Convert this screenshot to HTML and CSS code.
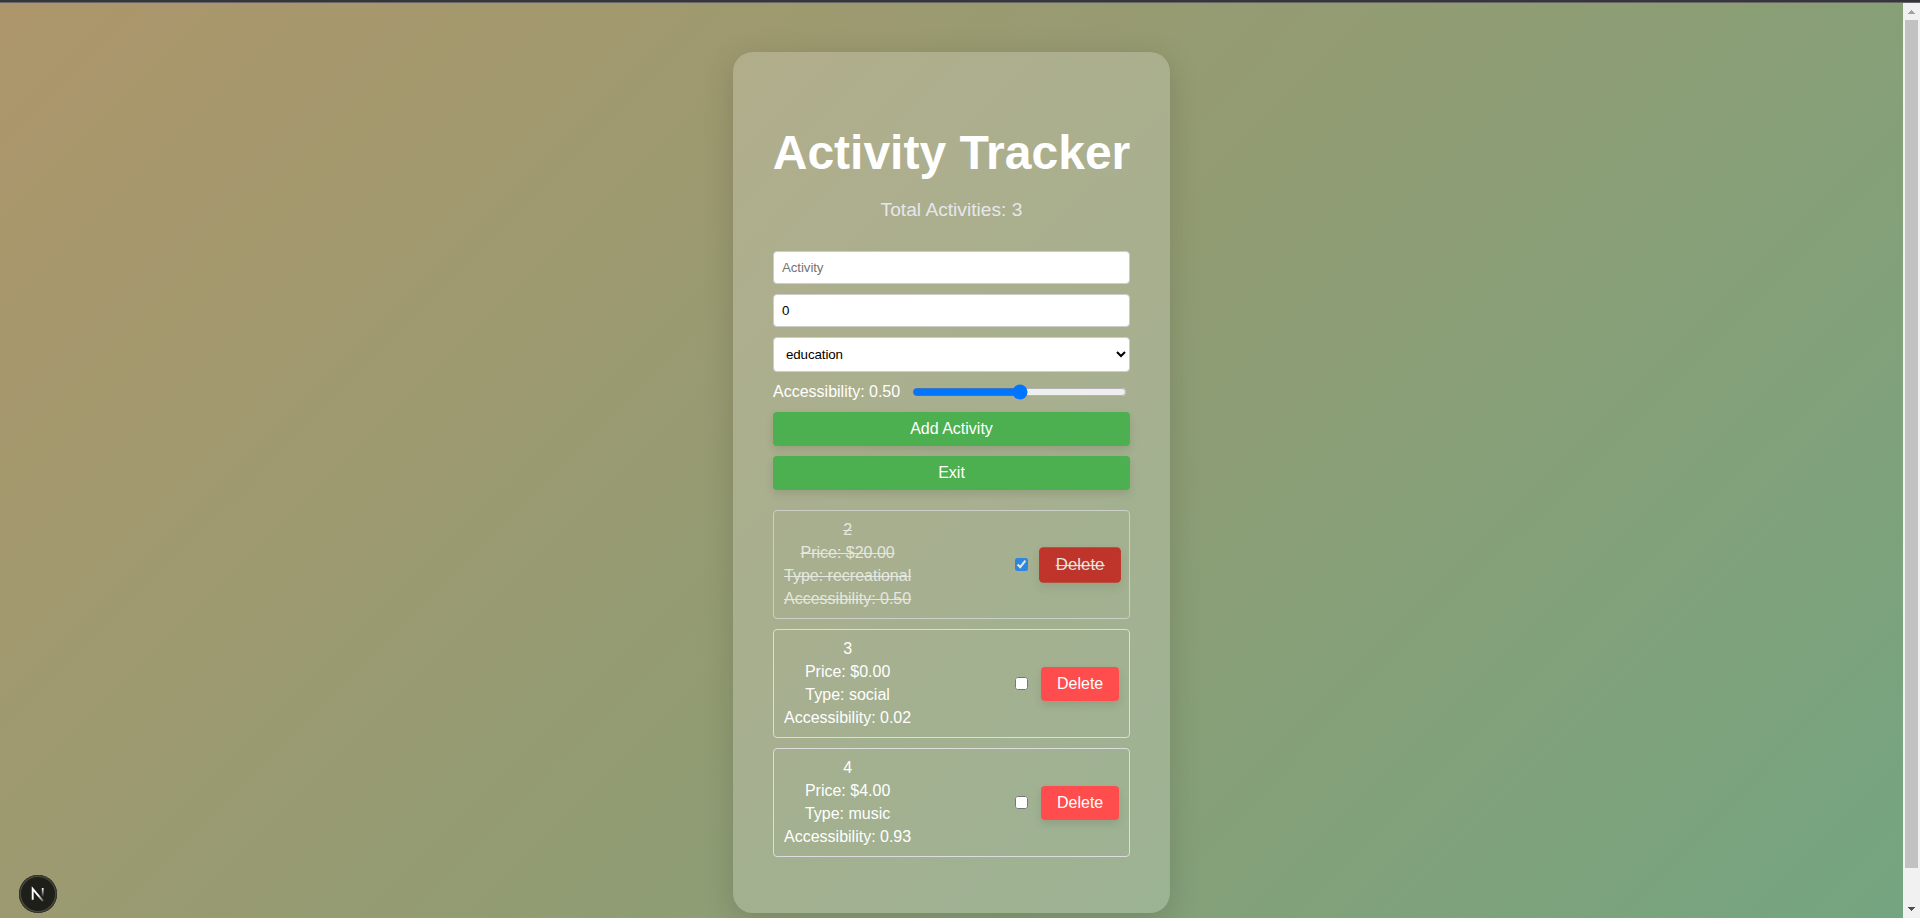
FILE: index.html
```html
<!DOCTYPE html>
<html lang="en">
<head>
<meta charset="utf-8">
<title>Activity Tracker</title>
<link rel="stylesheet" href="styles.css">
</head>
<body>
<div class="topline"></div>
<div class="window">
  <main class="page">
    <section class="card">
      <h1 class="title">Activity Tracker</h1>
      <p class="total">Total Activities: 3</p>
      <form class="form">
        <input class="field" type="text" placeholder="Activity">
        <input class="field" type="text" value="0">
        <select class="field select"><option>education</option></select>
        <label class="access"><span>Accessibility: 0.50</span><input class="range" type="range" min="0" max="1" step="0.01" value="0.5"></label>
        <button class="btn" type="button">Add Activity</button>
        <button class="btn" type="button">Exit</button>
      </form>
      <ul class="list">
        <li class="item done">
          <div class="info"><span>2</span><span>Price: $20.00</span><span>Type: recreational</span><span>Accessibility: 0.50</span></div>
          <div class="actions"><input class="check" type="checkbox" checked><button class="btn delete" type="button">Delete</button></div>
        </li>
        <li class="item">
          <div class="info"><span>3</span><span>Price: $0.00</span><span>Type: social</span><span>Accessibility: 0.02</span></div>
          <div class="actions"><input class="check" type="checkbox"><button class="btn delete" type="button">Delete</button></div>
        </li>
        <li class="item">
          <div class="info"><span>4</span><span>Price: $4.00</span><span>Type: music</span><span>Accessibility: 0.93</span></div>
          <div class="actions"><input class="check" type="checkbox"><button class="btn delete" type="button">Delete</button></div>
        </li>
      </ul>
    </section>
    <div class="badge">
      <svg width="38" height="38" viewBox="0 0 38 38" fill="none">
        <defs>
          <linearGradient id="diag" x1="20" y1="20" x2="25" y2="26" gradientUnits="userSpaceOnUse"><stop stop-color="#fff"/><stop offset="1" stop-color="#fff" stop-opacity=".2"/></linearGradient>
          <linearGradient id="stem" x1="24" y1="13" x2="24" y2="22" gradientUnits="userSpaceOnUse"><stop stop-color="#fff"/><stop offset="1" stop-color="#fff" stop-opacity="0"/></linearGradient>
        </defs>
        <path d="M13.7 24.7V13.8L24 26.2" stroke="url(#diag)" stroke-width="1.9"/>
        <path d="M23.7 13V22" stroke="url(#stem)" stroke-width="1.8"/>
      </svg>
    </div>
  </main>
  <div class="scrollbar">
    <svg class="arrow" width="17" height="17" shape-rendering="crispEdges"><path d="M5 11h7l-3.5-4z" fill="#a3a3a3"/></svg>
    <div class="thumb"></div>
    <svg class="arrow" width="17" height="17" shape-rendering="crispEdges"><path d="M5 6h7l-3.5 4z" fill="#505050"/></svg>
  </div>
</div>
</body>
</html>
```

FILE: styles.css
```css
* { box-sizing: border-box; }
body {
  margin: 0;
  height: 918px;
  overflow: hidden;
  display: flex;
  flex-direction: column;
  font: 16px/23px "Liberation Sans", Arial, sans-serif;
  color: #fff;
}
.topline { height: 3px; background: #363638; border-bottom: 1px solid #66666a; }
.window { flex: 1; display: flex; min-height: 0; }
.page {
  position: relative;
  flex: 1;
  overflow: hidden;
  padding-top: 49px;
  background: linear-gradient(135deg, #ae966b, #929c73 50%, #74a580);
}
.card {
  width: 437px;
  height: 861px;
  margin: 0 auto;
  padding: 69px 40px 0;
  border-radius: 20px;
  background: rgba(255, 255, 255, .2);
  box-shadow: 0 8px 32px rgba(0, 0, 0, .15);
  text-align: center;
}
.title { margin: 0 -1px; font-size: 48px; line-height: 64px; white-space: nowrap; }
.total { margin: 11px 0 0; font-size: 19.2px; line-height: 28px; color: #e5e7eb; }
.form { display: flex; flex-direction: column; gap: 10px; margin-top: 27px; }
.field {
  height: 33px;
  margin: 0;
  padding: 8px;
  border: 1px solid #ccc;
  border-radius: 4px;
  background: #fff;
  color: #000;
  font: 13.333px "Liberation Sans", Arial, sans-serif;
  letter-spacing: -.1px;
}
.select { height: 35px; }
.access { display: flex; align-items: center; height: 20px; }
.access span { padding-bottom: 2px; }
.range { flex: 1; min-width: 0; margin: 0 3px 0 12px; }
.btn {
  height: 34px;
  padding: 0 16px;
  border: 0;
  border-radius: 4px;
  background: #4caf50;
  color: #fff;
  font: 16px "Liberation Sans", Arial, sans-serif;
  box-shadow: 0 4px 8px rgba(0, 0, 0, .1);
}
.list { display: flex; flex-direction: column; gap: 10px; margin: 20px 0 0; padding: 0; list-style: none; }
.item {
  display: flex;
  justify-content: space-between;
  align-items: center;
  height: 109px;
  padding: 0 10px;
  border: 1px solid #ddd;
  border-radius: 4px;
}
.info { display: flex; flex-direction: column; padding-bottom: 2px; }
.actions { display: flex; align-items: center; gap: 13px; }
.check { width: 13px; height: 13px; margin: 0; }
.delete { width: 78px; background: #ff4d4d; }
.done { opacity: .7; text-decoration: line-through; }
.done .delete { background: #cc0000; transform: scale(1.05); text-decoration: line-through; }
.badge {
  position: absolute;
  left: 19px;
  bottom: 5px;
  width: 38px;
  height: 38px;
  border-radius: 50%;
  background: #1f1f1a;
  box-shadow: inset 0 0 0 1px #33332b, inset 0 0 0 2px #4b4b42;
}
.scrollbar { width: 17px; background: #f1f1f1; display: flex; flex-direction: column; }
.arrow { display: block; flex: none; }
.thumb { flex: none; height: 848px; margin: 0 2px 33px; background: #c1c1c1; }
```
